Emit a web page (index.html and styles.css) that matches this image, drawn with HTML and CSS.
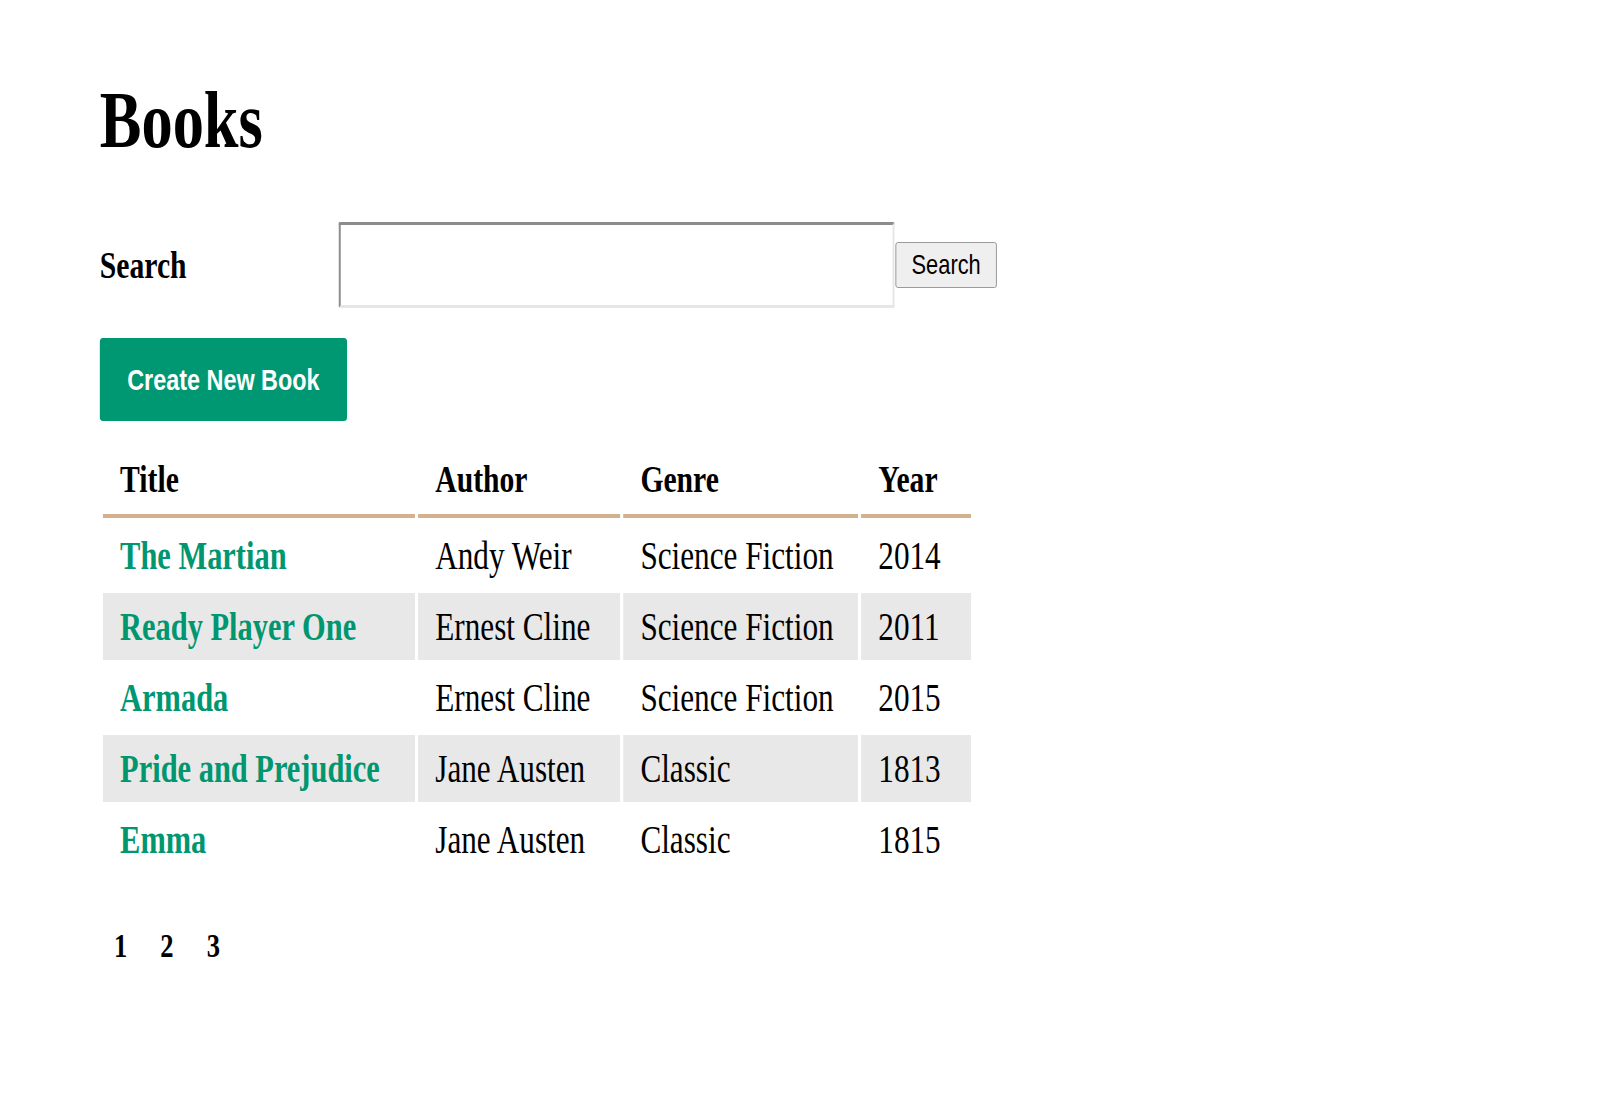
FILE: index.html
```html
<!DOCTYPE html>
<html lang="en">
<head>
<meta charset="utf-8">
<title>Books</title>
<link rel="stylesheet" href="styles.css">
</head>
<body>
<div class="page">
  <h1 class="title">Books</h1>
  <form class="search-row">
    <label class="search-label" for="q">Search</label>
    <input class="search-input" id="q" type="text">
    <button class="search-btn" type="button">Search</button>
  </form>
  <div class="actions">
    <a class="create-btn" href="#">Create New Book</a>
  </div>
  <table class="books">
    <thead>
      <tr>
        <th class="c-title">Title</th>
        <th class="c-author">Author</th>
        <th class="c-genre">Genre</th>
        <th class="c-year">Year</th>
      </tr>
    </thead>
    <tbody>
      <tr><td><a href="#">The Martian</a></td><td>Andy Weir</td><td>Science Fiction</td><td>2014</td></tr>
      <tr><td><a href="#">Ready Player One</a></td><td>Ernest Cline</td><td>Science Fiction</td><td>2011</td></tr>
      <tr><td><a href="#">Armada</a></td><td>Ernest Cline</td><td>Science Fiction</td><td>2015</td></tr>
      <tr><td><a href="#">Pride and Prejudice</a></td><td>Jane Austen</td><td>Classic</td><td>1813</td></tr>
      <tr><td><a href="#">Emma</a></td><td>Jane Austen</td><td>Classic</td><td>1815</td></tr>
    </tbody>
  </table>
  <nav class="pagination">
    <a href="#">1</a>
    <a href="#">2</a>
    <a href="#">3</a>
  </nav>
</div>
</body>
</html>
```
FILE: styles.css
```css
html, body {
  margin: 0;
  padding: 0;
  background: #ffffff;
}

body {
  font-family: "Liberation Serif", "Times New Roman", serif;
  color: #000;
  overflow: hidden;
}

/* the whole page is rendered horizontally condensed */
.page {
  transform: scaleX(0.78);
  transform-origin: 0 0;
  padding: 81px 0 0 128px;
}

.title {
  margin: 0;
  font-size: 80px;
  line-height: 78px;
  font-weight: 700;
}

.search-row {
  display: flex;
  align-items: center;
  gap: 1px;
  margin: 63px 0 0;
}

.search-label {
  flex: none;
  width: 305px;
  font-size: 38px;
  line-height: 41px;
  font-weight: 700;
}

.search-input {
  flex: none;
  box-sizing: border-box;
  width: 713px;
  height: 86px;
  margin: 0;
  padding: 0 8px;
  border: 3px solid;
  border-color: #8c8c8c #e6e6e6 #e6e6e6 #8c8c8c;
  border-radius: 2px;
  background: #fff;
  font-size: 28px;
}

.search-btn {
  flex: none;
  box-sizing: border-box;
  width: 130px;
  height: 46px;
  margin: 0;
  padding: 0;
  font-family: "Liberation Sans", Arial, sans-serif;
  font-size: 28px;
  color: #000;
  background: #efefef;
  border: 1px solid #8f8f8f;
  border-radius: 3px;
}

.actions {
  margin-top: 30px;
}

.create-btn {
  display: inline-flex;
  align-items: center;
  height: 83px;
  padding: 0 35px;
  box-sizing: border-box;
  background: #009873;
  color: #fff;
  border-radius: 4px;
  font-family: "Liberation Sans", Arial, sans-serif;
  font-weight: 700;
  font-size: 30px;
  text-decoration: none;
}

.books {
  margin-top: 24px;
  width: 1121px;
  table-layout: fixed;
  border-collapse: separate;
  border-spacing: 4px;
}

.books th,
.books td {
  box-sizing: border-box;
  text-align: left;
  vertical-align: top;
  white-space: nowrap;
}

.books th {
  padding: 10px 22px 14px;
  font-size: 38px;
  line-height: 41px;
  font-weight: 700;
  border-bottom: 4px solid #d4b08e;
}

.c-title { width: 400px; }
.c-author { width: 259px; }
.c-genre { width: 301px; }
.c-year { width: 141px; }

.books td {
  padding: 10px 22px;
  font-size: 40px;
  line-height: 47px;
}

.books tbody tr:nth-child(even) td {
  background: #e8e8e8;
}

.books td a {
  color: #00966f;
  font-weight: 700;
  font-size: 39px;
  text-decoration: none;
}

.pagination {
  display: flex;
  gap: 42.6px;
  margin-top: 49px;
  padding-left: 18px;
  font-size: 34px;
  line-height: 39px;
  font-weight: 700;
}

.pagination a {
  color: #000;
  text-decoration: none;
}
```
